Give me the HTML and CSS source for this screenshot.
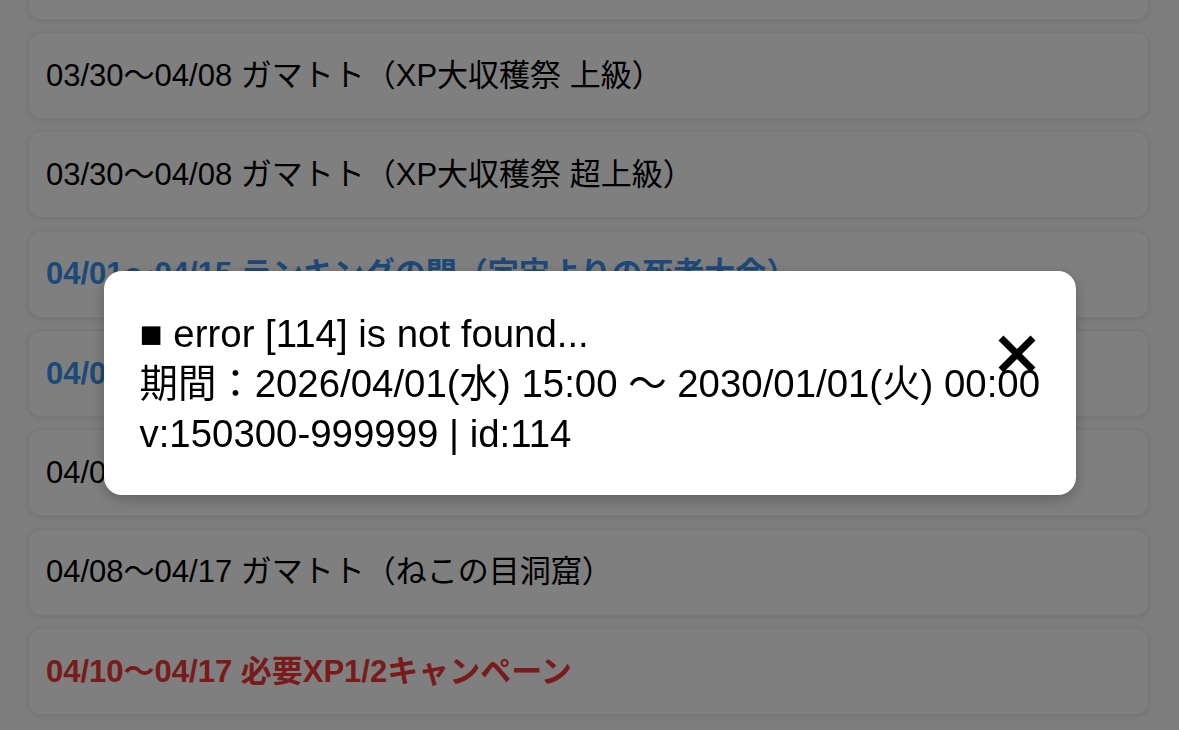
FILE: index.html
```html
<!DOCTYPE html>
<html lang="ja">
<head>
<meta charset="utf-8">
<title>イベント一覧</title>
<link rel="stylesheet" href="styles.css">
</head>
<body>
<main class="list">
  <div class="card">03/30～04/08 ガマトト（XP大収穫祭 中級）</div>
  <div class="card">03/30～04/08 ガマトト（XP大収穫祭 上級）</div>
  <div class="card">03/30～04/08 ガマトト（XP大収穫祭 超上級）</div>
  <div class="card card-blue">04/01～04/15 ランキングの間（宇宙よりの死者大会）</div>
  <div class="card card-blue">04/01～04/15 ランキングの間（真レジェンド大会）</div>
  <div class="card">04/06～04/13 ガマトト（XP大収穫祭 極上級）</div>
  <div class="card">04/08～04/17 ガマトト（ねこの目洞窟）</div>
  <div class="card card-red">04/10～04/17 必要XP1/2キャンペーン</div>
</main>
<div class="overlay">
  <div class="modal">
    <p class="line"><span class="sq">■</span> error [114] is not found...</p>
    <p class="line">期間：2026/04/01(水) 15:00 ～ 2030/01/01(火) 00:00</p>
    <p class="line">v:150300-999999 | id:114</p>
    <button class="close" type="button" aria-label="閉じる">
      <svg viewBox="0 0 40 40" width="40" height="40"><path d="M4 4 L36 36 M36 4 L4 36" stroke="#000" stroke-width="7" fill="none"/></svg>
    </button>
  </div>
</div>
</body>
</html>
```
FILE: styles.css
```css
html, body {
  margin: 0;
  padding: 0;
  background: #fafafa;
  font-family: "Liberation Sans", "Noto Sans CJK JP", sans-serif;
  overflow: hidden;
  height: 730px;
}
.list {
  display: flex;
  flex-direction: column;
  gap: 12.33px;
  padding: 0 30px 0 28px;
  margin-top: -67.3px;
}
.card {
  background: #fff;
  border: 1px solid #f0f0f0;
  border-radius: 13px;
  box-shadow: 0 1px 5px rgba(0, 0, 0, 0.09);
  padding: 24.5px 17px;
  font-size: 31px;
  line-height: 36px;
  color: #000;
  white-space: nowrap;
  overflow: hidden;
}
.card-blue {
  color: #3a92f2;
  font-weight: bold;
}
.card-red {
  color: #f23636;
  font-weight: bold;
}
.overlay {
  position: fixed;
  inset: 0;
  background: rgba(0, 0, 0, 0.5);
  display: flex;
  justify-content: center;
  align-items: flex-start;
  padding-top: 271px;
}
.modal {
  position: relative;
  width: 972px;
  box-sizing: border-box;
  background: #fff;
  border-radius: 18px;
  box-shadow: 0 4px 14px rgba(0, 0, 0, 0.25);
  padding: 38px 30px 36px 36px;
}
.line {
  margin: 0;
  font-size: 38.4px;
  line-height: 50px;
  color: #000;
  white-space: nowrap;
}
.sq {
  font-family: "Liberation Sans", "DejaVu Sans", sans-serif;
}
.close {
  position: absolute;
  top: 63px;
  right: 39px;
  width: 40px;
  height: 40px;
  padding: 0;
  border: 0;
  background: transparent;
  display: flex;
}
```
